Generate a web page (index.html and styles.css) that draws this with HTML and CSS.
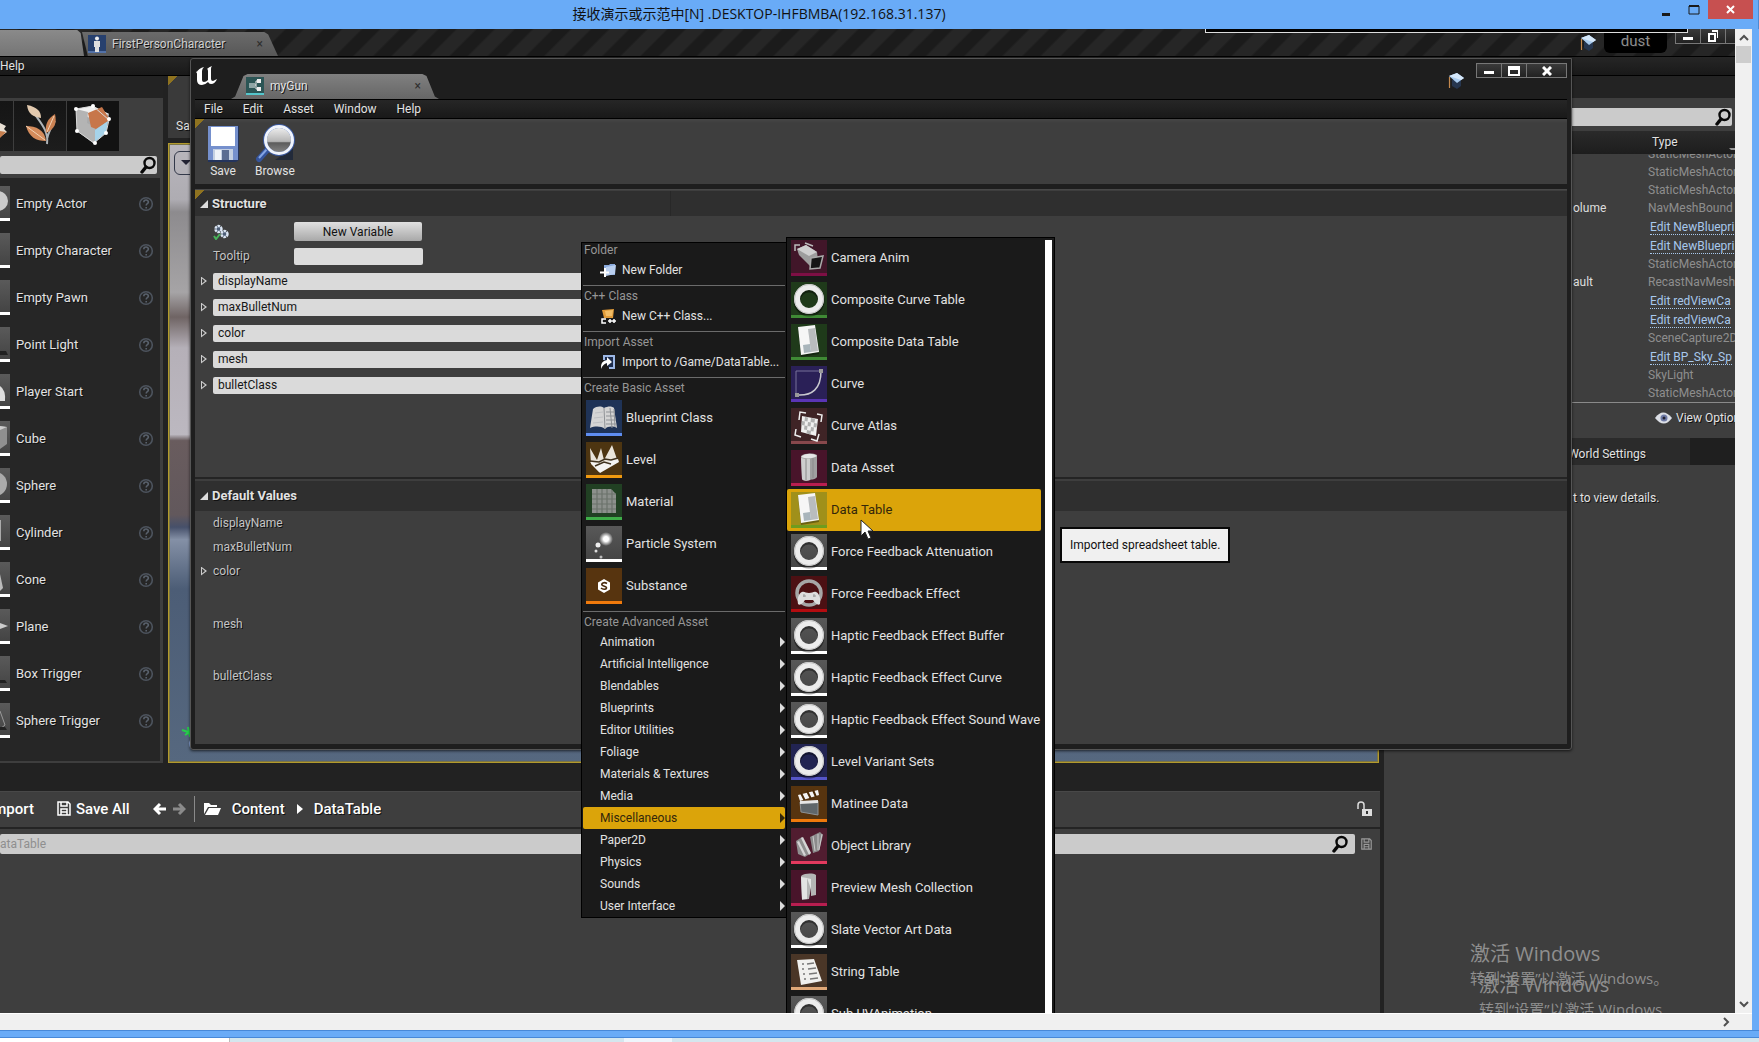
FILE: index.html
```html
<!DOCTYPE html>
<html lang="zh-CN">
<head>
<meta charset="utf-8">
<title>接收演示或示范中[N] .DESKTOP-IHFBMBA(192.168.31.137)</title>
<link rel="stylesheet" href="styles.css">
</head>
<body>
<svg class="defs" aria-hidden="true">
  <defs>
    <linearGradient id="metal" x1="0" y1="0" x2="1" y2="1"><stop offset="0" stop-color="#f2f2f2"/><stop offset="1" stop-color="#8b8b8b"/></linearGradient>
    <linearGradient id="lens" x1="0" y1="0" x2="0" y2="1"><stop offset="0" stop-color="#f4f4f4"/><stop offset=".55" stop-color="#b5b5b5"/><stop offset=".6" stop-color="#5c5c5c"/><stop offset="1" stop-color="#8a8a8a"/></linearGradient>
    <radialGradient id="glow"><stop offset="0" stop-color="#fff"/><stop offset=".35" stop-color="#fff"/><stop offset="1" stop-color="#fff" stop-opacity="0"/></radialGradient>
  </defs>
  <symbol id="i-search" viewBox="0 0 16 18"><circle cx="9.500" cy="7" r="5" fill="none" stroke="#080808" stroke-width="2.400"/><path d="M6 11L2 16" stroke="#080808" stroke-width="3.400" stroke-linecap="round"/></symbol>
  <symbol id="i-help" viewBox="0 0 16 16"><circle cx="8" cy="8" r="6.300" fill="none" stroke="#4d545e" stroke-width="1.600"/><path d="M5.800 6.300c0-3 4.600-2.900 4.600-.2 0 1.600-2.200 1.700-2.200 3.400M8.200 11v1.500" fill="none" stroke="#59616c" stroke-width="1.600"/></symbol>
  <symbol id="i-cap" viewBox="0 0 16 18"><path d="M4 8v6l5 3 4-3V8z" fill="#26364f"/><path d="M1 4l8-3 7 5-7 5z" fill="#a9cbee"/><path d="M1 4l8-3 7 5-3 2z" fill="#d5e8fa"/><path d="M1.500 5v11" stroke="#c4894e" stroke-width="1.200"/></symbol>
  <symbol id="i-ring" viewBox="0 0 36 36"><circle cx="18" cy="19" r="12" fill="none" stroke="#0006" stroke-width="7"/><circle cx="18" cy="17" r="12" fill="none" stroke="#ececec" stroke-width="6"/><circle cx="18" cy="17" r="14.500" fill="none" stroke="#c4c4c4"/></symbol>
  <symbol id="i-table" viewBox="0 0 36 36"><path d="M7 4l17-2 4 28-18 3z" fill="#0005"/><path d="M7 3l17-2 4 27-18 3z" fill="#f6f6f6"/><path d="M17 5l7-1 3 23-7 1z" fill="#b9bcbe"/><path d="M12 21l7-1 1 8-7 1z" fill="#a9b5bb"/></symbol>
  <symbol id="i-book" viewBox="0 0 36 36"><path d="M7 9c4-3 8-3 11-1 4-2 8-2 10 0l3 20c-4-2-9-2-12 1-4-3-10-3-15-1z" fill="#d4d4d4"/><path d="M18 8l1 21" stroke="#8f9296" fill="none"/><path d="M20 12h9M20 16h9M20 20h10M20 24h10M24 8l2 20M28 9l1 18" stroke="#8f9296" fill="none"/><path d="M9 13l8-1M8 18l9-1M7 23l10-1" stroke="#bdbfc2"/></symbol>
  <symbol id="i-level" viewBox="0 0 36 36"><path d="M5 22L4 6l7 12 4-12 3 12 8-15 6 17-19 10z" fill="#e9e4da"/><path d="M4 20l10 2 18-5 1 3-19 11z" fill="#f4f4f2"/><path d="M4 19l9 1 6-3 6 1 7-2M9 24l9-4 7 2" stroke="#40331f" stroke-width="1.500" fill="none"/></symbol>
  <symbol id="i-material" viewBox="0 0 36 36"><path d="M6 5h19l5 5v19H6z" fill="#8c908c"/><path d="M6 10h24M6 15h24M6 20h24M6 25h24M11 5v24M16 5v24M21 5v24M26 6v23" stroke="#6b726b" stroke-width="1.200"/></symbol>
  <symbol id="i-particle" viewBox="0 0 36 36"><circle cx="20" cy="13" r="7" fill="url(#glow)"/><circle cx="12" cy="19" r="2.500" fill="#eee"/><circle cx="10" cy="25" r="1.500" fill="#ddd"/><circle cx="15" cy="31" r="1.500" fill="#bbb"/></symbol>
  <symbol id="i-substance" viewBox="0 0 36 36"><path d="M18 11l6 3.500v7L18 25l-6-3.500v-7z" fill="#fff"/><path d="M21 15.500c-3-2-6 0-5 1.500s5 1 4.500 3-4 1.500-5.500 0" fill="none" stroke="#4a2b10" stroke-width="1.600"/></symbol>
  <symbol id="i-camera" viewBox="0 0 36 36"><path d="M4 11V5h5M14 3l8 3" fill="none" stroke="#bbb" stroke-width="1.500"/><path d="M6 9l9-4 11 7 1 8-8 6L8 15z" fill="#9d9d9d"/><path d="M6 9l9-4 11 7-8 4z" fill="#cfcfcf"/><path d="M20 18l12-2-3 12-10 1z" fill="#151515" stroke="#a9a9a9" stroke-width="1.500"/></symbol>
  <symbol id="i-curve" viewBox="0 0 36 36"><path d="M5 29V5h25" fill="none" stroke="#77709a"/><path d="M6 29c15 1 24-6 24-24" fill="none" stroke="#c9c9cf" stroke-width="1.500"/><path d="M4 27h4v4H4zM28 3h4v4h-4z" fill="#9a9a9a"/></symbol>
  <symbol id="i-atlas" viewBox="0 0 36 36"><path d="M11 8l16 3-2 17-15-4z" fill="#f0f0f0"/><path d="M14 9l3 .5-.5 4-3-.5zM20 10l4 .7-.5 4-4-.7zM11 13l3 .5-.5 4-3-.5zM17 14l3 .5-.5 4-3-.5zM23 15l3 .5-.5 4-3-.5zM13.500 17.500l3 .5-.5 4-3-.5zM20 19l3 .5-.5 4-3-.5zM16 22l4 1-.5 3.500-4-1z" fill="#b0b0b0"/><path d="M8 12l1-8 6 1M26 6l5 1-1 7M5 21l-1 6 6 2M20 31l6 2 2-7" fill="none" stroke="#eee" stroke-width="1.500"/></symbol>
  <symbol id="i-asset" viewBox="0 0 36 36"><path d="M10 6c4-3 12-3 16-1v22c-2 3-5 2-7 3-3 1-7 1-8-1z" fill="#a0a0a0"/><path d="M10 7c4 2 12 2 16-1-4-3-12-3-16 1z" fill="#e6e6e6"/><path d="M19 9v21c-3 1-7 1-8-1L10 8c3 1 6 1 9 1z" fill="#cdcdcd"/><path d="M15 9v21M22 8v20" stroke="#8a8a8a"/></symbol>
  <symbol id="i-pad" viewBox="0 0 36 36"><circle cx="18" cy="17" r="12" fill="none" stroke="#a6a6a6" stroke-width="3.500"/><path d="M7 28c-1-6 1-11 4-12 2-1 4 1 7 1s5-2 7-1c3 1 5 6 4 12-2 2-5-1-7-4h-8c-2 3-5 6-7 4z" fill="#dedede"/><path d="M13 18v3M12 20h3M23 18v3M22 20h3" stroke="#999"/></symbol>
  <symbol id="i-clap" viewBox="0 0 36 36"><path d="M9 16l18-1v14l-17-3z" fill="#5f666a" stroke="#8d9296"/><path d="M7 9l20-5 1 5-19 6z" fill="#f4f4f4"/><path d="M10 7l4 8M16 5l4 8M22 4l3 7" stroke="#4a2b08" stroke-width="2"/><path d="M9 15l18-1v3l-18 1z" fill="#e6e6e6"/></symbol>
  <symbol id="i-lib" viewBox="0 0 36 36"><path d="M5 13l6-4 9 16-6 4-7-3z" fill="#8f8f8f"/><path d="M10 10l2-1 8 16-2 2zM6 14l2-1 7 14-2 1z" fill="#d5d5d5"/><path d="M19 9l10-5 3 3-4 16-6 2z" fill="#8b8b8b"/><path d="M22 8l2 15M27 6l0 16M31 6l-3 16" stroke="#ccc"/></symbol>
  <symbol id="i-mesh" viewBox="0 0 36 36"><path d="M10 6c4-3 12-3 15-1v20l-5 1v-8l-2 11-7 1z" fill="#b5b5b5"/><path d="M10 7l6 1v21h-5zM16 8l4 1v10" fill="#e3e3e3"/></symbol>
  <symbol id="i-string" viewBox="0 0 36 36"><path d="M6 6l17-1 8 22-21 4z" fill="#f0f0ee"/><path d="M11 10h2M11 15h2M12 20h2M13 25h2M16 10l7-1M17 15l8-1M18 20l8-1M19 25l8-1" stroke="#777" stroke-width="1.500"/></symbol>
  <symbol id="i-disk" viewBox="0 0 14 15"><path d="M1 1h10l2 2v11H1zM4 1v4h6V1M4 14V8h6v6M4 11h6" fill="none" stroke="currentColor" stroke-width="1.500"/></symbol>
</svg>

<div class="shell">
  <header class="titlebar">
    <h1 class="titlebar-text">接收演示或示范中[N] .DESKTOP-IHFBMBA(192.168.31.137)</h1>
    <div class="titlebar-buttons">
      <button class="tb" aria-label="Minimize"><svg width="10" height="14"><path d="M1 10h8v3H1z" fill="#1a1a1a"/></svg></button>
      <button class="tb" aria-label="Maximize"><svg width="12" height="12"><path d="M1 2h10v8H1z" fill="none" stroke="#1a1a1a"/><path d="M1 1h10v2H1z" fill="#1a1a1a"/></svg></button>
      <button class="tb tb-close" aria-label="Close"><svg width="10" height="10"><path d="M1 1l7 7M8 1L1 8" stroke="#fff" stroke-width="2"/></svg></button>
    </div>
  </header>

  <div class="stage">
    <main class="remote">
      <div class="editor">
        <div class="tabs">
          <div class="tab tab-level"></div>
          <div class="tab tab-char">
            <svg width="18" height="18"><path d="M0 0h18v18H0z" fill="#27406e"/><path d="M0 17h18" stroke="#7ea2e0"/><circle cx="9" cy="3.500" r="2" fill="#eee"/><path d="M6 6h6v6h-1v5H7v-5H6z" fill="#e0e0e0"/></svg>
            <span>FirstPersonCharacter</span><button class="x" aria-label="Close tab">×</button>
          </div>
          <div class="tabs-right">
            <svg width="16" height="18"><use href="#i-cap"/></svg>
            <span class="project">dust</span>
            <span class="mini"><button aria-label="Minimize"><svg width="10" height="10"><path d="M0 6h10v3H0z" fill="#fff"/></svg></button><button aria-label="Restore"><svg width="10" height="12"><path d="M1 4h6v7H1zM4 1h6v7" fill="none" stroke="#fff" stroke-width="2"/></svg></button></span>
          </div>
        </div>
        <nav class="menubar main-menu"><a href="#">Help</a></nav>

        <div class="editor-body">
          <div class="left">
            <div class="upper">
              <section class="placer">
                <div class="strip"></div>
                <div class="placer-panel">
                  <div class="modes">
                    <button class="mode mode-cut" aria-label="Landscape"><svg width="10" height="50"><path d="M0 22l6 3-2 3 3 3-7 5z" fill="#e8e0d4"/><path d="M0 30l6 1-6 6z" fill="#c67f4f"/></svg></button>
                    <button class="mode" aria-label="Foliage"><svg width="52" height="50"><path d="M33 43C35 30 26 21 20 12M33 38c2-8 4-12 8-18" stroke="#aeb4b8" stroke-width="2" fill="none"/><path d="M13 4c10 2 14 6 14 13-8-1-13-4-14-13z" fill="#e2c9ae"/><path d="M41 13c2 9 0 15-9 19-1-8 1-14 9-19z" fill="#cc8253"/><path d="M12 25c10 0 19 4 20 15-10 0-17-4-20-15z" fill="#d58c5c"/><path d="M12 25l19 14M40 15l-7 16" stroke="#f2d2b4"/></svg></button>
                    <button class="mode mode-on" aria-label="Geometry"><svg width="52" height="50"><path d="M9 8l17-3 16 8-2 15-14 14-16-12z" fill="#a9aaab"/><path d="M9 8l17-3 16 8-18 5z" fill="#f0f0f0"/><path d="M9 8l12 3-1 11 8 4v16L10 30z" fill="#b4b4b4"/><path d="M21 12l14-6 8 13-14 9-5-2z" fill="#c7764a"/><path d="M28 29l13-9-2 12-11 9z" fill="#a6d3ea"/><path d="M9 8l17-3 16 14-3 13-12 10-17-12z" fill="none" stroke="#d8d8d8"/><g fill="#fff"><circle cx="9" cy="8" r="2"/><circle cx="26" cy="5" r="2"/><circle cx="42" cy="18" r="2"/><circle cx="39" cy="32" r="2"/><circle cx="28" cy="42" r="2"/><circle cx="10" cy="30" r="2"/></g></svg></button>
                  </div>
                  <label class="search placer-search"><input type="text" aria-label="Search classes"><svg width="16" height="18"><use href="#i-search"/></svg></label>
                  <ul class="actors">
                    <li><span class="thumb"><svg width="10" height="32"><circle cx="-2" cy="15" r="10" fill="#ccc"/></svg></span><span class="actor">Empty Actor</span><svg width="16" height="16"><use href="#i-help"/></svg></li>
                    <li><span class="thumb"></span><span class="actor">Empty Character</span><svg width="16" height="16"><use href="#i-help"/></svg></li>
                    <li><span class="thumb"></span><span class="actor">Empty Pawn</span><svg width="16" height="16"><use href="#i-help"/></svg></li>
                    <li><span class="thumb"><svg width="10" height="32"><path d="M0 24h6l2 4H0z" fill="#222"/></svg></span><span class="actor">Point Light</span><svg width="16" height="16"><use href="#i-help"/></svg></li>
                    <li><span class="thumb"><svg width="10" height="32"><path d="M0 12q6 4 5 15H0z" fill="#ddd"/></svg></span><span class="actor">Player Start</span><svg width="16" height="16"><use href="#i-help"/></svg></li>
                    <li><span class="thumb"><svg width="10" height="32"><path d="M0 5l7 1v17l-7 5z" fill="#8f8f8f"/><path d="M0 5l7 1-7 3z" fill="#ccc"/></svg></span><span class="actor">Cube</span><svg width="16" height="16"><use href="#i-help"/></svg></li>
                    <li><span class="thumb"><svg width="10" height="32"><circle cx="-5" cy="16" r="12" fill="#aaa"/></svg></span><span class="actor">Sphere</span><svg width="16" height="16"><use href="#i-help"/></svg></li>
                    <li><span class="thumb"><svg width="10" height="32"><path d="M0 5v21" stroke="#aaa" stroke-width="2"/></svg></span><span class="actor">Cylinder</span><svg width="16" height="16"><use href="#i-help"/></svg></li>
                    <li><span class="thumb"><svg width="10" height="32"><path d="M0 12l3 14-3 3z" fill="#bbb"/></svg></span><span class="actor">Cone</span><svg width="16" height="16"><use href="#i-help"/></svg></li>
                    <li><span class="thumb"><svg width="10" height="32"><path d="M0 14l8 3-8 3z" fill="#ccc"/></svg></span><span class="actor">Plane</span><svg width="16" height="16"><use href="#i-help"/></svg></li>
                    <li><span class="thumb"><svg width="10" height="32"><path d="M0 24h5l2 3H0z" fill="#222"/></svg></span><span class="actor">Box Trigger</span><svg width="16" height="16"><use href="#i-help"/></svg></li>
                    <li><span class="thumb"><svg width="10" height="32"><path d="M0 8l5 14-5 4" fill="none" stroke="#999"/><path d="M0 24h5l2 3H0z" fill="#222"/></svg></span><span class="actor">Sphere Trigger</span><svg width="16" height="16"><use href="#i-help"/></svg></li>
                  </ul>
                </div>
              </section>
              <section class="scene">
                <div class="scene-bar"><i class="corner"></i><span>Sa</span></div>
                <div class="scene-view"><button class="scene-menu" aria-label="Viewport options"><svg width="10" height="6"><path d="M0 0h10L5 5z" fill="#223"/></svg></button><svg class="axis" width="18" height="24"><path d="M3 5l12 4M6 10l9-6M9 2l2 10" stroke="#25d04a" stroke-width="2"/><path d="M15 12q-7 5-2 12" stroke="#8aa5d8" stroke-width="2" fill="none"/></svg></div>
              </section>
            </div>

            <section class="browser">
              <div class="browser-gap"></div>
              <div class="browser-panel">
                <div class="browser-bar">
                  <button class="import">Import</button>
                  <button class="save-all"><svg width="14" height="15"><use href="#i-disk"/></svg>Save All</button>
                  <button aria-label="Back"><svg width="13" height="14"><path d="M13 7H3M7 2L2 7l5 5" fill="none" stroke="#fff" stroke-width="3"/></svg></button>
                  <button aria-label="Forward" class="fwd"><svg width="13" height="14"><path d="M0 7h10M6 2l5 5-5 5" fill="none" stroke="#8b8b8b" stroke-width="3"/></svg></button>
                  <i class="vline"></i>
                  <svg width="17" height="14"><path d="M0 12V1h5l2 2h6v2H4z" fill="#fff"/><path d="M1 13l4-7h12l-3 7z" fill="#fff"/></svg>
                  <a href="#" class="crumb">Content</a>
                  <svg width="6" height="10"><path d="M0 0l6 5-6 5z" fill="#fff"/></svg>
                  <a href="#" class="crumb">DataTable</a>
                  <svg class="lock" width="15" height="16"><path d="M1 8V4q0-3 3-3t3 3v4" fill="none" stroke="#ddd" stroke-width="1.500"/><path d="M5 8h10v7H5z" fill="#ddd"/><path d="M10 10v3" stroke="#333" stroke-width="2"/></svg>
                </div>
                <div class="browser-find">
                  <label class="search"><input type="text" placeholder="ataTable" aria-label="Search DataTable"><svg width="16" height="18"><use href="#i-search"/></svg></label>
                  <svg class="dim" width="11" height="12" viewBox="0 0 14 15"><use href="#i-disk"/></svg>
                </div>
              </div>
            </section>
          </div>

          <aside class="right">
            <div class="strip"></div>
            <label class="search outliner-search"><input type="text" aria-label="Search actors"><svg width="16" height="18"><use href="#i-search"/></svg></label>
            <div class="outliner">
              <div class="outliner-head"><span>Type</span><svg width="6" height="5"><path d="M0 1h6v2H2z" fill="#999"/></svg></div>
              <div class="outliner-scroll">
              <table>
                <tr><td></td><td>StaticMeshActor</td></tr>
                <tr><td></td><td>StaticMeshActor</td></tr>
                <tr><td></td><td>StaticMeshActor</td></tr>
                <tr><td>olume</td><td>NavMeshBound</td></tr>
                <tr class="lk"><td></td><td><a href="#">Edit NewBluepri</a></td></tr>
                <tr class="lk"><td></td><td><a href="#">Edit NewBluepri</a></td></tr>
                <tr><td></td><td>StaticMeshActor</td></tr>
                <tr><td>ault</td><td>RecastNavMesh</td></tr>
                <tr class="lk"><td></td><td><a href="#">Edit redViewCa</a></td></tr>
                <tr class="lk"><td></td><td><a href="#">Edit redViewCa</a></td></tr>
                <tr><td></td><td>SceneCapture2D</td></tr>
                <tr class="lk"><td></td><td><a href="#">Edit BP_Sky_Sp</a></td></tr>
                <tr><td></td><td>SkyLight</td></tr>
                <tr><td></td><td>StaticMeshActor</td></tr>
              </table>
              </div>
            </div>
            <div class="view-options"><svg width="17" height="12"><path d="M0 6q8-11 17 0-8 11-17 0z" fill="#dcdfe6"/><circle cx="9" cy="6" r="3.500" fill="#6f7ba6"/><circle cx="9" cy="6" r="1.500" fill="#223"/></svg><span>View Options</span></div>
            <div class="details-tabs"><span>World Settings</span></div>
            <p class="details-empty">t to view details.</p>
          </aside>
        </div>
      </div>

      <div class="topline"></div>

      <section class="gun">
        <header class="gun-top">
          <svg class="ue" width="22" height="22"><path d="M0 7Q3 2 8 1Q6 3 6 5v9q0 2 2 2t4-2V5q0-2-1-2 2-2 5-3-1 1-1 3v10q0 2 2 2l4-2q-2 5-6 5-2 0-3-2-3 3-6 3-5 0-5-5V8q0-3-2-3-2 0-3 2z" fill="#fff"/></svg>
          <div class="tab gun-tab">
            <svg width="18" height="18"><path d="M0 0h18v18H0z" fill="#2c5555"/><path d="M0 17h18" stroke="#55c6cc" stroke-width="2"/><path d="M3 6h6v5H3z" fill="#8fa5a5"/><path d="M11 2h4v4h-4zM11 10h4v4h-4z" fill="#eee"/><path d="M9 8h1V4h1M10 8v4h1" stroke="#eee" fill="none"/></svg>
            <span>myGun</span><button class="x" aria-label="Close tab">×</button>
          </div>
          <svg class="gun-cap" width="16" height="18"><use href="#i-cap"/></svg>
          <span class="mini gun-mini"><button aria-label="Minimize"><svg width="10" height="10"><path d="M0 5h10v3H0z" fill="#fff"/></svg></button><button aria-label="Maximize"><svg width="12" height="10"><path d="M1 1h10v8H1z" fill="none" stroke="#fff" stroke-width="2"/><path d="M0 1h12v3H0z" fill="#fff"/></svg></button><button class="wide" aria-label="Close"><svg width="10" height="10"><path d="M1 1l8 8M9 1L1 9" stroke="#fff" stroke-width="3"/></svg></button></span>
        </header>
        <nav class="menubar gun-menu"><a href="#">File</a><a href="#">Edit</a><a href="#">Asset</a><a href="#">Window</a><a href="#">Help</a></nav>
        <div class="toolbar">
          <i class="corner"></i>
          <button class="tool"><svg width="40" height="40"><path d="M5 2h31v34l-3 2H5z" fill="#24345c"/><path d="M5 2h30v34H5z" fill="#7590cd"/><path d="M8 3h24v19H8z" fill="#fff"/><path d="M10 25h20v11H10z" fill="#c3cfe2"/><path d="M19 26h7v10h-7z" fill="#5b6d92"/><path d="M12 26h6v10h-6z" fill="#eef2f8"/></svg>Save</button>
          <button class="tool"><svg width="40" height="40"><path d="M13 25L4 35" stroke="#35549b" stroke-width="6" stroke-linecap="round"/><path d="M13 24L4 34" stroke="#84a5e4" stroke-width="2"/><path d="M20 36h18V24z" fill="#222a3a"/><circle cx="24" cy="16" r="14" fill="url(#lens)" stroke="#3c5aa0" stroke-width="4"/><circle cx="24" cy="16" r="13.500" fill="none" stroke="#f0f4fc" stroke-width="3"/></svg>Browse</button>
        </div>
        <div class="struct">
          <i class="corner"></i>
          <h2 class="cat"><svg width="8" height="8"><path d="M8 0v8H0z" fill="#ddd"/></svg>Structure</h2>
          <div class="form">
            <div class="field new-var"><span class="label"><svg width="16" height="16"><circle cx="5.500" cy="5" r="3" fill="#4e5f78" stroke="#dbe6f4" stroke-width="2.500" stroke-dasharray="2.500 .7"/><circle cx="11.500" cy="10" r="3" fill="#4e5f78" stroke="#dbe6f4" stroke-width="2.500" stroke-dasharray="2.500 .7"/><path d="M1 12l2 3 4-5" stroke="#48b45a" stroke-width="2" fill="none"/></svg></span><button class="newvar">New Variable</button></div>
            <div class="field"><label class="label" for="tip">Tooltip</label><input id="tip" class="tipbox" type="text"></div>
            <div class="var"><i class="tri"></i><input type="text" value="displayName" aria-label="Variable 1"></div>
            <div class="var"><i class="tri"></i><input type="text" value="maxBulletNum" aria-label="Variable 2"></div>
            <div class="var"><i class="tri"></i><input type="text" value="color" aria-label="Variable 3"></div>
            <div class="var"><i class="tri"></i><input type="text" value="mesh" aria-label="Variable 4"></div>
            <div class="var"><i class="tri"></i><input type="text" value="bulletClass" aria-label="Variable 5"></div>
          </div>
        </div>
        <div class="defaults">
          <h2 class="cat"><svg width="8" height="8"><path d="M8 0v8H0z" fill="#ddd"/></svg>Default Values</h2>
          <ul class="vals">
            <li>displayName</li>
            <li>maxBulletNum</li>
            <li><i class="tri"></i>color</li>
            <li class="tall">mesh</li>
            <li>bulletClass</li>
          </ul>
        </div>
      </section>

      <div class="menu menu-add" role="menu">
        <h3>Folder</h3>
        <button class="mi ico"><svg width="16" height="16"><path d="M4 3h5l1-1h5v11H4z" fill="#89a9dc"/><path d="M6 5l10-2-1 9-9 2z" fill="#b9cff0"/><path d="M5 6v9M0 10.500h9" stroke="#fff" stroke-width="2"/></svg>New Folder</button>
        <hr>
        <h3>C++ Class</h3>
        <button class="mi ico"><svg width="16" height="16"><path d="M2 2l12-1-1 9H4z" fill="#e09a38"/><path d="M5 3l8-1-1 6H6z" fill="#f2bd66"/><path d="M6 11H2v4h4M10 11v4M8 13h4M14 11v4M12 13h4" stroke="#fff" stroke-width="1.500" fill="none"/></svg>New C++ Class...</button>
        <hr>
        <h3>Import Asset</h3>
        <button class="mi ico"><svg width="16" height="16"><path d="M4 6V2h10v12H9" fill="#1d2c4c" stroke="#9db8e6" stroke-width="2"/><path d="M1 15q-1-8 6-9V3l5 5-5 4V9q-4 1-6 6z" fill="#fff"/></svg>Import to /Game/DataTable...</button>
        <hr>
        <h3>Create Basic Asset</h3>
        <div class="group">
        <button class="asset"><span class="tile blue"><svg><use href="#i-book"/></svg></span>Blueprint Class</button>
        <button class="asset"><span class="tile amber"><svg><use href="#i-level"/></svg></span>Level</button>
        <button class="asset"><span class="tile lime"><svg><use href="#i-material"/></svg></span>Material</button>
        <button class="asset"><span class="tile"><svg><use href="#i-particle"/></svg></span>Particle System</button>
        <button class="asset"><span class="tile orange"><svg><use href="#i-substance"/></svg></span>Substance</button>
        </div>
        <hr>
        <h3>Create Advanced Asset</h3>
        <div class="group">
        <button class="mi sub">Animation</button>
        <button class="mi sub">Artificial Intelligence</button>
        <button class="mi sub">Blendables</button>
        <button class="mi sub">Blueprints</button>
        <button class="mi sub">Editor Utilities</button>
        <button class="mi sub">Foliage</button>
        <button class="mi sub">Materials &amp; Textures</button>
        <button class="mi sub">Media</button>
        <button class="mi sub hot">Miscellaneous</button>
        <button class="mi sub">Paper2D</button>
        <button class="mi sub">Physics</button>
        <button class="mi sub">Sounds</button>
        <button class="mi sub">User Interface</button>
        </div>
      </div>

      <div class="menu menu-misc" role="menu">
        <div class="misc-list">
          <button class="asset"><span class="tile plum"><svg><use href="#i-camera"/></svg></span>Camera Anim</button>
          <button class="asset"><span class="tile green"><svg><use href="#i-ring"/></svg></span>Composite Curve Table</button>
          <button class="asset"><span class="tile green"><svg><use href="#i-table"/></svg></span>Composite Data Table</button>
          <button class="asset"><span class="tile violet"><svg><use href="#i-curve"/></svg></span>Curve</button>
          <button class="asset"><span class="tile brown"><svg><use href="#i-atlas"/></svg></span>Curve Atlas</button>
          <button class="asset"><span class="tile pink"><svg><use href="#i-asset"/></svg></span>Data Asset</button>
          <button class="asset hot"><span class="tile olive"><svg><use href="#i-table"/></svg></span>Data Table</button>
          <button class="asset"><span class="tile"><svg><use href="#i-ring"/></svg></span>Force Feedback Attenuation</button>
          <button class="asset"><span class="tile red"><svg><use href="#i-pad"/></svg></span>Force Feedback Effect</button>
          <button class="asset"><span class="tile"><svg><use href="#i-ring"/></svg></span>Haptic Feedback Effect Buffer</button>
          <button class="asset"><span class="tile"><svg><use href="#i-ring"/></svg></span>Haptic Feedback Effect Curve</button>
          <button class="asset"><span class="tile"><svg><use href="#i-ring"/></svg></span>Haptic Feedback Effect Sound Wave</button>
          <button class="asset"><span class="tile indigo"><svg><use href="#i-ring"/></svg></span>Level Variant Sets</button>
          <button class="asset"><span class="tile orange"><svg><use href="#i-clap"/></svg></span>Matinee Data</button>
          <button class="asset"><span class="tile rose"><svg><use href="#i-lib"/></svg></span>Object Library</button>
          <button class="asset"><span class="tile pink"><svg><use href="#i-mesh"/></svg></span>Preview Mesh Collection</button>
          <button class="asset"><span class="tile"><svg><use href="#i-ring"/></svg></span>Slate Vector Art Data</button>
          <button class="asset"><span class="tile tan"><svg><use href="#i-string"/></svg></span>String Table</button>
          <button class="asset"><span class="tile"><svg><use href="#i-ring"/></svg></span>Sub UVAnimation</button>
        </div>
        <i class="misc-bar"></i>
      </div>

      <div class="tooltip" role="tooltip">Imported spreadsheet table.</div>
      <svg class="cursor" width="14" height="22"><path d="M1 1v16l4-4 3 7 3-1-3-7h5z" fill="#fff" stroke="#222"/></svg>

      <div class="mark mark-a"><p class="mark-big">激活 Windows</p><p>转到“设置”以激活 Windows。</p></div>
      <div class="mark mark-b"><p class="mark-big">激活 Windows</p><p>转到“设置”以激活 Windows</p></div>
    </main>
    <div class="vscroll"><svg width="10" height="8"><path d="M1 6l4-4 4 4" fill="none" stroke="#505050" stroke-width="2"/></svg><i class="thumbbar"></i><svg class="down" width="10" height="8"><path d="M1 2l4 4 4-4" fill="none" stroke="#505050" stroke-width="2"/></svg></div>
  </div>
  <div class="hscroll"><svg width="8" height="10"><path d="M2 1l4 4-4 4" fill="none" stroke="#505050" stroke-width="2"/></svg></div>
  <div class="edge"></div>
  <footer class="desk"><i></i><b></b></footer>
</div>
</body>
</html>
```
FILE: styles.css
```css
* { box-sizing: border-box; }
body {
  margin: 0;
  height: 100vh;
  overflow: hidden;
  font: 12px/16px Roboto, "Noto Sans CJK SC", sans-serif;
  color: #e2e2e2;
}
button, input { font: inherit; color: inherit; padding: 0; margin: 0; border: 0; background: none; text-align: left; white-space: nowrap; }
a { color: inherit; text-decoration: none; }
h1, h2, h3, p, ul { margin: 0; padding: 0; font-weight: normal; font-size: inherit; list-style: none; }
svg { flex: none; display: block; }
.defs { position: absolute; width: 0; height: 0; }

/* remote viewer frame */
.shell { height: 100%; display: flex; flex-direction: column; background: #69abf7; }
.titlebar { position: relative; flex: 0 0 29px; display: flex; align-items: flex-start; justify-content: center; padding: 4px 240px 0 0; color: #111; border-right: 1px solid #4c8ad2; }
.titlebar-text { font: 14px/20px "Open Sans", "Noto Sans CJK SC", sans-serif; }
.titlebar-buttons { position: absolute; top: 0; right: 5px; display: flex; }
.tb { width: 28px; height: 19px; display: flex; align-items: center; justify-content: center; }
.tb-close { width: 45px; background: #c75050; }
.stage { flex: 1; min-height: 0; display: flex; margin-right: 7px; }
.remote { position: relative; flex: 1; min-width: 0; overflow: hidden; background: #222; }
.vscroll { flex: 0 0 17px; background: #f0f0f0; display: flex; flex-direction: column; align-items: center; padding: 5px 0; }
.thumbbar { width: 15px; height: 17px; background: #cdcdcd; margin-top: 4px; }
.vscroll .down { margin-top: auto; }
.hscroll { flex: 0 0 17px; margin-right: 7px; background: #f0f0f0; border-top: 1px solid #fff; display: flex; align-items: center; justify-content: flex-end; padding-right: 22px; }
.edge { flex: 0 0 8px; border: solid #4788d8; border-width: 1px 0; }
.desk { flex: 0 0 4px; display: flex; background: #d4e6ee; }
.desk i { width: 230px; background: #fff; border-right: 1px solid #bbb; }
.desk b { width: 48px; margin-left: 394px; background: #eef5fb; }

/* level editor */
.editor { height: 100%; display: flex; flex-direction: column; text-shadow: 1px 1px 0 #111; }
.tabs { flex: 0 0 28px; display: flex; align-items: flex-end; border-bottom: 1px solid #000; background: repeating-linear-gradient(135deg, #262626 0 12px, #1b1b1b 14px 25px, #262626 27px); }
.tab { display: flex; align-items: center; height: 24px; background: linear-gradient(#6b6b6b, #575757); }
.tab-level { width: 84px; height: 26px; background: linear-gradient(#8a8a8a, #757575); clip-path: polygon(0 0, 92% 0, 96% 12%, 100% 100%, 0 100%); }
.tab-char { width: 196px; padding: 0 15px 0 6px; gap: 6px; color: #cfcfcf; clip-path: polygon(0 0, 93% 0, 95% 10%, 100% 100%, 3% 100%); margin-left: -2px; }
.x { margin-left: auto; color: #2e2e2e; text-shadow: none; }
.tabs-right { margin-left: auto; height: 100%; display: flex; align-items: flex-start; gap: 8px; }
.tabs-right > svg { margin-top: 5px; }
.project { width: 63px; height: 24px; background: #000; border-radius: 0 0 6px 6px; text-align: center; font-size: 15px; line-height: 25px; color: #8d8d8d; }
.mini { display: flex; height: 15px; border: 1px solid #777; border-top: 0; background: linear-gradient(#3a3a3a, #222); }
.mini button { width: 25px; display: flex; align-items: center; justify-content: center; border-right: 1px solid #777; }
.tabs-right .mini { width: 60px; border-right: 0; }
.menubar { display: flex; align-items: center; gap: 20px; background: linear-gradient(#262626, #191919); border-bottom: 1px solid #000; }
.main-menu { flex: 0 0 19px; }
.editor-body { flex: 1; min-height: 0; display: flex; }
.left { flex: 1; min-width: 0; display: flex; flex-direction: column; }
.upper { flex: 1; min-height: 0; display: flex; gap: 5px; padding: 0 5px 1px 0; }
.strip { flex: 0 0 22px; background: #232323; }
.placer { flex: 0 0 163px; min-width: 0; display: flex; flex-direction: column; }
.placer-panel { flex: 1; min-height: 0; background: #3e3e3e; padding: 3px 3px 2px 0; display: flex; flex-direction: column; }
.modes { display: flex; gap: 1px; }
.mode { width: 52px; height: 50px; background: linear-gradient(#151515, #1d1d1d); }
.mode-cut { width: 13px; }
.mode-on { background: #121212; }
.search { display: flex; align-items: center; height: 18px; background: #cbcbcb; border-radius: 2px; padding-right: 1px; }
.search input { flex: 1; width: 0; min-width: 0; }
.search input::placeholder { color: #8f8f8f; opacity: 1; }
.placer-search { margin: 5px 3px 4px 0; }
.actors { flex: 1; min-height: 0; background: #262626; padding-top: 2px; overflow: hidden; }
.actors li { height: 47px; display: flex; align-items: center; padding-right: 6px; font-size: 13px; }
.thumb { width: 10px; height: 35px; margin-right: 6px; background: linear-gradient(#5a5a5a, #444); border-bottom: 3px solid #fff; }
.actor { flex: 1; }
.scene { flex: 1; display: flex; flex-direction: column; gap: 5px; }
.scene-bar { flex: 0 0 62px; background: #3a3a3a; padding: 42px 0 0 8px; position: relative; }
.corner { position: absolute; left: 0; top: 0; width: 9px; height: 9px; background: linear-gradient(135deg, #8f7320 50%, transparent 51%); }
.scene-view { position: relative; flex: 1; border: 1px solid #b39a2c; box-shadow: inset 0 0 0 1px #7c7644;
  background: linear-gradient(#b9b6bd 0, #aeacb2 9%, #8d8b8e 11%, #a6a4a6 24%, #6f6464 28%, #b5b0b8 33%, #bcb8c0 47%, #695c5e 48%, #62585c 60%, #46506a 62%, #8490a6 64%, #4c5d76 72%, #56687f 100%); }
.scene-menu { position: absolute; left: 5px; top: 7px; width: 24px; height: 24px; border: 1px solid #33394a; border-radius: 6px; padding-left: 6px; }
.axis { position: absolute; left: 10px; bottom: 13px; }

/* content browser */
.browser { flex: 0 0 249px; display: flex; flex-direction: column; padding-right: 4px; }
.browser-gap { flex: 0 0 27px; background: #222; }
.browser-panel { flex: 1; background: #3e3e3e; border-top: 1px solid #484848; }
.browser-bar { height: 37px; display: flex; align-items: center; font: 500 15px/20px Roboto, sans-serif; color: #fff; border-bottom: 2px solid #242424; padding: 0 8px 2px 0; }
.import { margin-left: -11px; }
.save-all { display: flex; align-items: center; gap: 5px; margin: 0 23px; }
.fwd { margin-left: 7px; }
.vline { width: 1px; height: 26px; margin: 0 9px 0 8px; background: #8a8a8a; }
.crumb { margin: 0 12px 0 11px; }
.lock { margin-left: auto; }
.browser-find { display: flex; align-items: center; gap: 6px; padding: 5px 8px 0 0; }
.browser-find .search { flex: 1; padding-right: 7px; text-shadow: none; height: 20px; }
.dim { color: #999; }

/* outliner */
.right { flex: 0 0 351px; min-width: 0; overflow: hidden; background: #3e3e3e; display: flex; flex-direction: column; }
.outliner-search { margin: 10px 3px 5px 0; }
.outliner-head { height: 23px; background: linear-gradient(#2a2a2a, #1d1d1d); padding: 3px 0 0 268px; display: flex; justify-content: space-between; }
.outliner-head svg { margin-top: 13px; }
.outliner-scroll { height: 248px; overflow: hidden; display: flex; align-items: flex-end; }
.outliner table { border-collapse: collapse; table-layout: fixed; width: 100%; }
.outliner td { height: 18px; padding: 0; white-space: nowrap; overflow: hidden; line-height: 16px; color: #8e8e8e; text-shadow: none; }
.outliner td:first-child { width: 264px; padding-left: 189px; color: #ddd; }
.outliner .lk td { height: 19px; padding-left: 2px; }
.outliner a { color: #a8c8ec; border-bottom: 1px dotted #a8c8ec; }
.view-options { height: 36px; border-top: 1px solid #8a8a8a; display: flex; align-items: center; gap: 4px; padding: 0 0 6px 271px; white-space: nowrap; overflow: hidden; }
.details-tabs { height: 27px; background: #1f1f1f; display: flex; }
.details-tabs span { width: 306px; background: #2b2b2b; text-align: right; padding: 8px 44px 0 0; }
.details-empty { padding: 25px 0 0 189px; }
.topline { position: absolute; right: 47px; top: 0; width: 483px; height: 4px; background: #000; border: 1px solid #ddd; border-top: 0; }

/* struct editor window */
.gun { position: absolute; left: 190px; right: 163px; top: 29px; bottom: 263px; background: #1e1e1e; border: 1px solid #555; border-radius: 3px 0 3px 3px; padding: 0 4px 5px 4px; display: flex; flex-direction: column; text-shadow: 1px 1px 0 #111; box-shadow: 0 1px 3px #000a; }
.gun-top { flex: 0 0 40px; display: flex; align-items: flex-end; }
.ue { align-self: flex-start; margin: 7px 13px 0 1px; }
.gun-tab { width: 208px; height: 25px; padding: 0 18px 2px 15px; gap: 6px; background: linear-gradient(#808080, #666); clip-path: polygon(0 100%, 2% 90%, 6% 8%, 8% 0, 92% 0, 94% 8%, 98% 90%, 100% 100%); }
.gun-cap { align-self: flex-start; margin: 13px 12px 0 auto; }
.gun-mini { align-self: flex-start; margin: 4px 0 0; border-top: 1px solid #777; }
.gun-mini .wide { width: 39px; border: 0; }
.gun-menu { flex: 0 0 20px; border-top: 1px solid #000; padding-left: 9px; }
.toolbar { position: relative; flex: 0 0 64px; background: linear-gradient(#464646, #3e3e3e 4px); display: flex; gap: 12px; padding: 5px 8px; }
.tool { display: flex; flex-direction: column; align-items: center; }
.tool svg { margin-bottom: -1px; }
.struct { position: relative; flex: 0 0 288px; margin-top: 5px; background: #3e3e3e; border-top: 1px solid #484848; padding: 1px 0 0; }
.cat { height: 25px; display: flex; align-items: center; gap: 4px; padding-left: 5px; font: 700 13px/18px Roboto, sans-serif; background: linear-gradient(90deg, #2f2f2f 475px, #282828 475px 476px, #2f2f2f 476px); }
.form { max-width: 475px; padding: 6px 0 0 18px; }
.field { display: flex; align-items: center; height: 24px; }
.new-var { height: 19px; margin-bottom: 3px; }
.label { width: 81px; color: #c4c4c4; }
.newvar { width: 128px; height: 19px; text-align: center; color: #111; text-shadow: none; background: linear-gradient(#e0e0e0, #a8a8a8); border-radius: 2px; }
.tipbox { width: 129px; height: 17px; background: #dcdcdc; border-radius: 2px; }
.var { display: flex; align-items: center; height: 26px; margin-left: -12px; padding-right: 8px; }
.var input { flex: 1; height: 17px; margin-left: 6px; padding-left: 5px; background: #dadada; border-radius: 2px; color: #161616; text-shadow: none; }
.tri { width: 6px; height: 9px; background: #ccc; clip-path: polygon(0 0, 100% 50%, 0 100%, 0 0, 1px 2px, 1px 7px, 4px 50%, 1px 2px); }
.defaults { flex: 1; background: #3e3e3e; border-top: 2px solid #242424; padding-top: 2px; }
.defaults .cat { height: 30px; background: #2f2f2f; }
.vals li { display: flex; align-items: center; height: 24px; padding-left: 18px; color: #c4c4c4; }
.vals .tall { height: 81px; }
.vals .tri { margin: 0 6px 0 -12px; }

/* popup menus */
.menu { position: absolute; background: #1a1a1a; border: 1px solid #000; }
.menu-add { left: 581px; top: 213px; width: 206px; padding: 0 1px; }
.menu h3 { height: 15px; line-height: 15px; padding-left: 1px; color: #969696; }
.menu hr { height: 1px; margin: 4px 0 3px; border: 0; background: #6b6b6b; }
.group { padding-top: 1px; }
.mi { display: flex; align-items: center; width: 100%; height: 22px; padding-left: 17px; }
.ico { height: 23px; gap: 6px; }
.sub::after { content: ""; margin-left: auto; width: 5px; height: 10px; background: #ddd; clip-path: polygon(0 0, 100% 50%, 0 100%); }
.hot { background: #dba40a; color: #33270a; }
.sub.hot { border-radius: 2px; }
.sub.hot::after { background: #33270a; }
.asset { display: flex; align-items: center; gap: 4px; width: 100%; height: 42px; padding-left: 3px; font-size: 13px; }
.asset.hot { border-radius: 2px; }
.tile { width: 36px; height: 36px; background: linear-gradient(#585858, #454545); border-bottom: 3px solid #fff; }
.tile svg { width: 36px; height: 36px; }
.blue { background: #1f3357; border-color: #5f8df0; }
.amber { background: #4d3511; border-color: #f09a10; }
.lime { background: #214023; border-color: #3fae49; }
.orange { background: #57340f; border-color: #f07a0c; }
.plum { background: #411629; border-color: #7e0f45; }
.green { background: #1f3a1a; border-color: #3f8a35; }
.violet { background: #2a2057; border-color: #5a35b5; }
.brown { background: #3f2426; border-color: #87484c; }
.pink { background: #48142a; border-color: #b81e50; }
.olive { background: #a0901a; border-color: #6f9c1e; }
.red { background: #4c1013; border-color: #b40c10; }
.indigo { background: #222452; border-color: #5656c8; }
.rose { background: #511d30; border-color: #e23a5e; }
.tan { background: #4a3627; border-color: #e0a878; }
.menu-misc { left: 786px; top: 208px; bottom: 0; width: 269px; border-bottom: 0; display: flex; gap: 4px; padding: 0 2px 0 0; overflow: hidden; }
.misc-list { flex: 1; overflow: hidden; margin-top: -1px; }
.misc-list .asset { padding-left: 4px; }
.misc-bar { width: 7px; margin-top: 2px; background: #fff; }
.tooltip { position: absolute; left: 1060px; top: 498px; border: 2px solid #080808; background: #f0f0f0; color: #111; padding: 8px; white-space: nowrap; }
.cursor { position: absolute; left: 860px; top: 490px; }
.mark { position: absolute; right: 70px; width: 195px; color: #8f8f8f; font: 15px/20px "Open Sans", "Noto Sans CJK SC", sans-serif; white-space: nowrap; }
.mark-big { font-size: 20px; line-height: 28px; }
.mark-a { bottom: 25px; }
.mark-b { bottom: -6px; margin-right: -9px; }
```
